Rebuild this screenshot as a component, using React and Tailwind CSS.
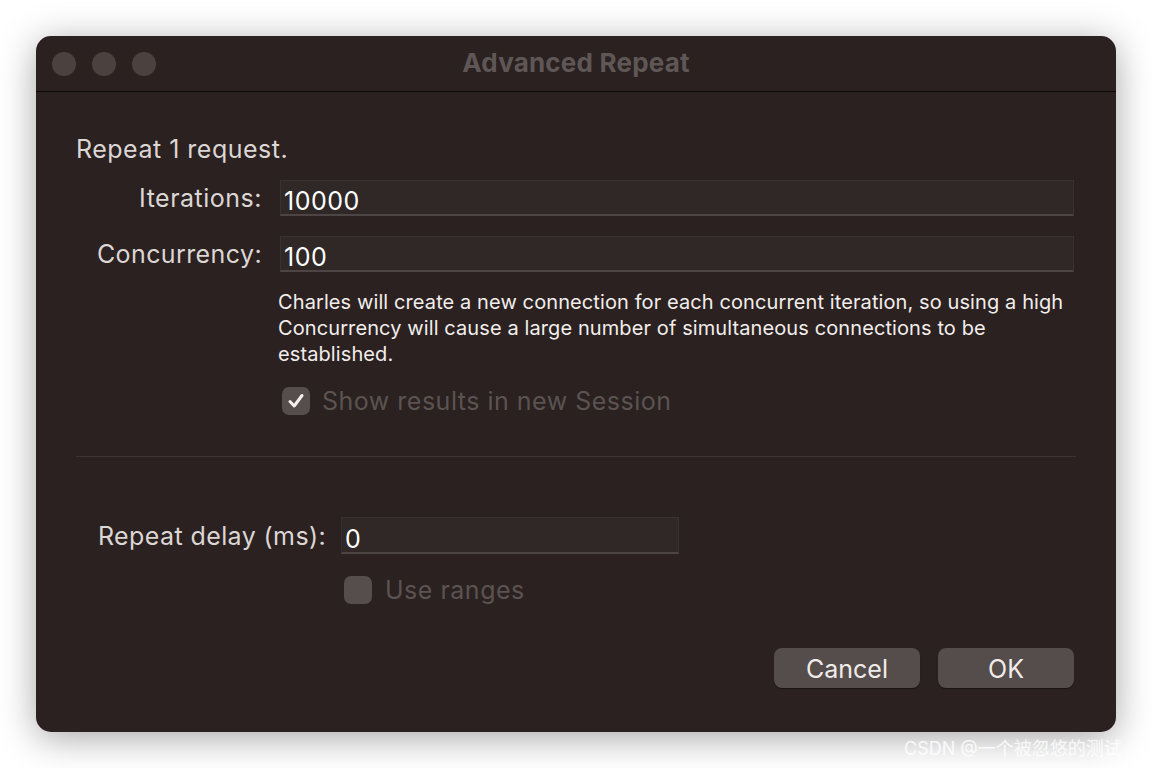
import React from "react";

const font = { fontFamily: "Inter, 'Noto Sans', 'Noto Sans CJK SC', sans-serif" };

function Field({ value, className }) {
  return (
    <div
      className={`h-[36px] bg-[#302827] border border-[#3a3231] border-b-2 border-b-[#4d4544] flex items-center pl-[3px] pt-[8px] text-[25px] tracking-[0.5px] text-white leading-none ${className}`}
    >
      {value}
    </div>
  );
}

function Check({ checked }) {
  return (
    <div className="w-[28px] h-[28px] rounded-[7px] bg-[#564e4c] flex items-center justify-center shrink-0">
      {checked && (
        <svg width="20" height="20" viewBox="0 0 20 20">
          <path d="M4 10.5 L8.2 15 L16 4.5" fill="none" stroke="#f4f0ee" strokeWidth="3" strokeLinecap="round" strokeLinejoin="round" />
        </svg>
      )}
    </div>
  );
}

export default function App() {
  return (
    <div className="relative w-[1152px] h-[768px] bg-white overflow-hidden pl-[36px] pt-[36px]" style={font}>
      <div className="w-[1080px] h-[696px] rounded-[15px] bg-[#2a2120] shadow-[0_6px_36px_rgba(0,0,0,0.35)] flex flex-col overflow-hidden">
        {/* title bar */}
        <div className="relative h-[56px] flex items-center px-[16px] gap-[16px] border-b border-b-[#0c0808] shrink-0">
          <div className="w-[24px] h-[24px] rounded-full bg-[#4b4240]" />
          <div className="w-[24px] h-[24px] rounded-full bg-[#4b4240]" />
          <div className="w-[24px] h-[24px] rounded-full bg-[#4b4240]" />
          <div className="absolute inset-0 flex items-center justify-center pb-[2px] text-[26px] font-bold tracking-[0.2px] text-[#5f5756] pointer-events-none">
            Advanced Repeat
          </div>
        </div>

        {/* body */}
        <div className="flex-1 flex flex-col pl-[40px] pr-[42px] pt-[44px] text-[#dcd6d4]">
          <div className="text-[25px] tracking-[0.5px] leading-[26px] h-[26px]">Repeat 1 request.</div>

          <div className="mt-[18px] flex items-center">
            <div className="w-[187px] text-right text-[25px] tracking-[0.5px] leading-[26px] pr-[1px] whitespace-nowrap">Iterations:</div>
            <Field value="10000" className="ml-[17px] flex-1" />
          </div>
          <div className="mt-[20px] flex items-center">
            <div className="w-[187px] text-right text-[25px] tracking-[0.4px] leading-[26px] pr-[1px] whitespace-nowrap">Concurrency:</div>
            <Field value="100" className="ml-[17px] flex-1" />
          </div>

          <div className="mt-[17px] ml-[202px] text-[20px] tracking-[0.1px] leading-[26px] text-[#f2eeec] whitespace-nowrap">
            Charles will create a new connection for each concurrent iteration, so using a high
            <br />
            Concurrency will cause a large number of simultaneous connections to be
            <br />
            established.
          </div>

          <div className="mt-[20px] ml-[206px] flex items-center gap-[12px] h-[28px]">
            <Check checked />
            <span className="text-[25px] tracking-[0.5px] leading-[26px] text-[#5b5351] whitespace-nowrap">Show results in new Session</span>
          </div>

          <div className="mt-[41px] h-px bg-[#3e3534] mr-[-2px]" />

          <div className="mt-[60px] ml-[22px] flex items-center">
            <span className="text-[25px] tracking-[0.4px] leading-[26px] whitespace-nowrap">Repeat delay (ms):</span>
            <Field value="0" className="ml-[15px] w-[338px] h-[37px]" />
          </div>

          <div className="mt-[22px] ml-[268px] flex items-center gap-[13px] h-[28px]">
            <Check />
            <span className="text-[25px] tracking-[0.5px] leading-[26px] text-[#5b5351]">Use ranges</span>
          </div>

          <div className="mt-[44px] flex justify-end gap-[18px]">
            <button className="w-[146px] h-[40px] rounded-[8px] bg-[#554d4b] pt-[3px] text-[25px] text-[#f0ecea] shadow-[0_1px_1px_rgba(0,0,0,0.4)]">
              Cancel
            </button>
            <button className="w-[136px] h-[40px] rounded-[8px] bg-[#554d4b] pt-[3px] text-[25px] text-[#f0ecea] shadow-[0_1px_1px_rgba(0,0,0,0.4)]">
              OK
            </button>
          </div>
        </div>
      </div>

      <div className="absolute left-[904px] top-[735px] text-[18px] text-white/80 whitespace-nowrap">
        CSDN @一个被忽悠的测试
      </div>
    </div>
  );
}
